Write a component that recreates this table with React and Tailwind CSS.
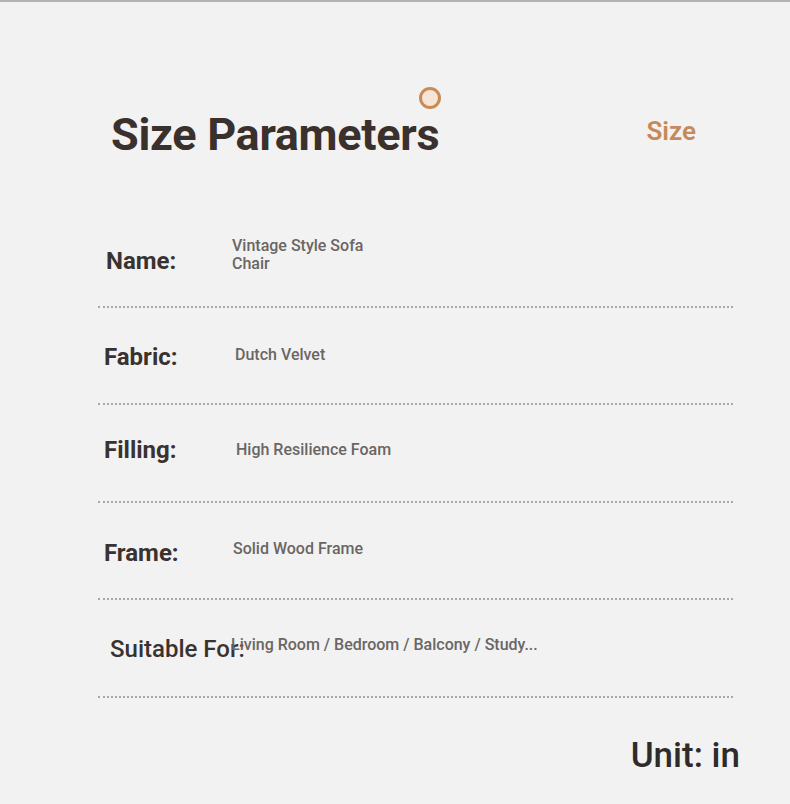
import React from "react";

const rows = [
  { label: "Name:", value: ["Vintage Style Sofa", "Chair"], lc: "pl-[8px] pt-[6px]", vc: "pl-[134px] -mt-[6px]", bold: true },
  { label: "Fabric:", value: ["Dutch Velvet"], lc: "pl-[6px] pt-[4px]", vc: "pl-[137px] -mt-[1px]", bold: true },
  { label: "Filling:", value: ["High Resilience Foam"], lc: "pl-[6px] -mt-[6px]", vc: "pl-[138px] -mt-[6px]", bold: true },
  { label: "Frame:", value: ["Solid Wood Frame"], lc: "pl-[6px] pt-[6px]", vc: "pl-[135px] -mt-[2px]", bold: true },
  { label: "Suitable For:", value: ["Living Room / Bedroom / Balcony / Study..."], lc: "pl-[12px] pt-[2px]", vc: "pl-[133px] -mt-[5px]", bold: false },
];

function Row({ r }) {
  return (
    <div className="relative h-[97.5px] border-b-2 border-dotted border-[#a8a8a8] flex items-center">
      <div
        className={
          (r.bold ? "font-bold text-[#3a3230] " : "font-medium text-[#3a3230] ") +
          "absolute left-0 text-[24px] leading-none " +
          r.lc
        }
      >
        {r.label}
      </div>
      <div className={"absolute left-0 text-[16px] leading-[18px] font-medium text-[#6a6664] " + r.vc}>
        {r.value.map((v) => (
          <div key={v}>{v}</div>
        ))}
      </div>
    </div>
  );
}

export default function App() {
  return (
    <div
      className="w-[790px] h-[804px] bg-[#f2f2f2] border-t-2 border-[#b5b3b1] relative overflow-hidden"
      style={{ fontFamily: "Roboto, 'Liberation Sans', sans-serif" }}
    >
      {/* ---- Encabezado ---- */}
      <div className="flex items-center justify-between pl-[111px] pr-[94px] pt-[110px]">
        <h1 className="text-[45px] font-bold text-[#3a302c] leading-none tracking-[-0.3px]">
          Size Parameters
        </h1>
        <span className="text-[26px] font-semibold text-[#c68a5a] leading-none -mt-[8px]">Size</span>
      </div>
      <div className="absolute left-[419px] top-[85px] w-[22px] h-[22px] rounded-full border-[3px] border-[#c98a55] bg-[#f6e4d6]" />

      {/* ---- Tabla ---- */}
      <div className="ml-[98px] w-[635px] mt-[53px]">
        {rows.map((r) => (
          <Row key={r.label} r={r} />
        ))}
      </div>

      {/* ---- Unidad ---- */}
      <div className="flex justify-end pr-[50px] mt-[40px]">
        <span className="text-[35px] font-medium text-[#2e2b2a] leading-none">Unit: in</span>
      </div>
    </div>
  );
}
